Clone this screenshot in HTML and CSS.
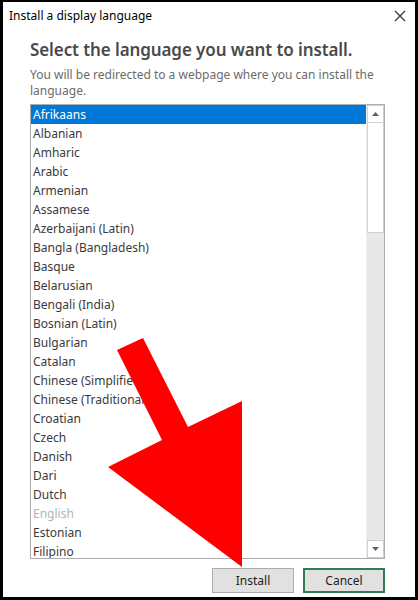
FILE: index.html
```html
<!DOCTYPE html>
<html lang="en">
<head>
    <meta charset="UTF-8">
    <meta name="viewport" content="width=device-width, initial-scale=1.0">
    <title>Install a display language</title>
    <link rel="stylesheet" href="styles.css">
</head>
<body>

    <div class="dialog">
        <div class="titlebar">
            <span class="title">Install a display language</span>
            <svg class="close" width="12" height="12" viewBox="0 0 12 12">
                <path d="M1 1 L11 11 M11 1 L1 11" stroke="#333" stroke-width="1.2" fill="none"/>
            </svg>
        </div>

        <div class="content">
            <h1>Select the language you want to install.</h1>
            <p class="hint">You will be redirected to a webpage where you can install the language.</p>

            <div class="listbox">
                <ul class="items">
                    <li class="selected">Afrikaans</li>
                    <li>Albanian</li>
                    <li>Amharic</li>
                    <li>Arabic</li>
                    <li>Armenian</li>
                    <li>Assamese</li>
                    <li>Azerbaijani (Latin)</li>
                    <li>Bangla (Bangladesh)</li>
                    <li>Basque</li>
                    <li>Belarusian</li>
                    <li>Bengali (India)</li>
                    <li>Bosnian (Latin)</li>
                    <li>Bulgarian</li>
                    <li>Catalan</li>
                    <li>Chinese (Simplified)</li>
                    <li>Chinese (Traditional)</li>
                    <li>Croatian</li>
                    <li>Czech</li>
                    <li>Danish</li>
                    <li>Dari</li>
                    <li>Dutch</li>
                    <li class="disabled">English</li>
                    <li>Estonian</li>
                    <li>Filipino</li>
                </ul>
                <div class="scrollbar">
                    <div class="sb-btn">
                        <svg width="7" height="4" viewBox="0 0 7 4"><path d="M0 4 L3.5 0 L7 4 Z" fill="#606060"/></svg>
                    </div>
                    <div class="sb-track">
                        <div class="sb-thumb"></div>
                    </div>
                    <div class="sb-btn">
                        <svg width="7" height="4" viewBox="0 0 7 4"><path d="M0 0 L7 0 L3.5 4 Z" fill="#606060"/></svg>
                    </div>
                </div>
            </div>

            <div class="buttons">
                <button class="btn">Install</button>
                <button class="btn btn-default">Cancel</button>
            </div>
        </div>
    </div>

    <!-- red pointer drawn on top of the dialog -->
    <svg class="arrow" width="418" height="600" viewBox="0 0 418 600">
        <polygon points="117,350 143,338 188,427 242,401 242,567 108,467 162,440" fill="#ff0000"/>
    </svg>

</body>
</html>
```

FILE: styles.css
```css
* {
    box-sizing: border-box;
}

body {
    margin: 0;
    font-family: "Noto Sans", "Open Sans", sans-serif;
    background-color: #000;
}

.dialog {
    width: 418px;
    height: 600px;
    background-color: #fff;
    border: 3px solid #000;
    border-top-width: 2px;
    display: flex;
    flex-direction: column;
    overflow: hidden;
}

.titlebar {
    flex-shrink: 0;
    height: 27px;
    display: flex;
    align-items: center;
    justify-content: space-between;
    padding: 0 9px 0 6px;
}

.title {
    font-size: 12px;
    color: #000;
}

.close {
    display: block;
}

.content {
    padding: 0 30px 0 27px;
    flex: 1;
    display: flex;
    flex-direction: column;
}

h1 {
    margin: 9px 0 0 0;
    font-size: 17px;
    font-weight: 600;
    color: #4a4a4a;
    line-height: 24px;
    letter-spacing: -0.1px;
    white-space: nowrap;
}

.hint {
    margin: 5px 0 0 0;
    font-size: 12px;
    line-height: 16px;
    color: #6b6b6b;
}

.listbox {
    flex-shrink: 0;
    margin-top: 5px;
    height: 455px;
    border: 1px solid #abadb3;
    display: flex;
    overflow: hidden;
}

.items {
    list-style: none;
    margin: 0;
    padding: 0;
    flex: 1;
    overflow: hidden;
}

.items li {
    height: 19px;
    line-height: 19px;
    padding-left: 2px;
    font-size: 12px;
    color: #3a3a3a;
    white-space: nowrap;
}

.items li.selected {
    background-color: #0078d7;
    color: #fff;
}

.items li.disabled {
    color: #b3b3b3;
}

.scrollbar {
    width: 18px;
    display: flex;
    flex-direction: column;
    background-color: #e8e8e8;
    border-left: 1px solid #f0f0f0;
}

.sb-btn {
    height: 18px;
    background-color: #fff;
    border: 1px solid #cfcfcf;
    display: flex;
    align-items: center;
    justify-content: center;
}

.sb-track {
    flex: 1;
    background-color: #e8e8e8;
}

.sb-thumb {
    height: 110px;
    background-color: #fff;
    border: 1px solid #cfcfcf;
    border-top: none;
}

.buttons {
    display: flex;
    justify-content: flex-end;
    gap: 9px;
    margin-top: 9px;
}

.btn {
    width: 82px;
    height: 25px;
    font-family: inherit;
    font-size: 12px;
    color: #222;
    background-color: #e1e1e1;
    border: 1px solid #adadad;
    padding: 0;
}

.btn-default {
    border: 2px solid #2f7d52;
}

.arrow {
    position: absolute;
    left: 0;
    top: 0;
    pointer-events: none;
}
```
